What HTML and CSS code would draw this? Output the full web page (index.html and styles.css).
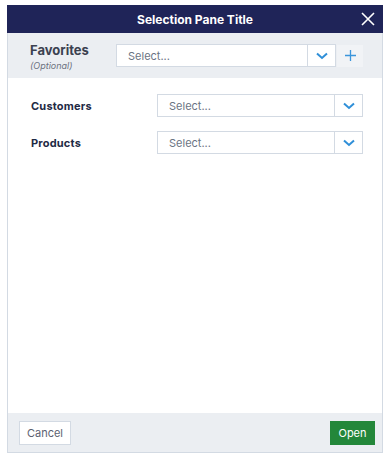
FILE: index.html
```html
<!DOCTYPE html>
<html lang="en">
<head>
    <meta charset="UTF-8">
    <title>Selection Pane</title>
    <link rel="stylesheet" href="styles.css">
</head>
<body>
    <div class="pane">
        <div class="pane-header">
            <span class="pane-title">Selection Pane Title</span>
            <button class="close-btn" aria-label="Close">
                <svg width="14" height="14" viewBox="0 0 14 14"><path d="M1 1L13 13M13 1L1 13" stroke="#fff" stroke-width="1.6"/></svg>
            </button>
        </div>
        <div class="favorites">
            <div class="fav-label">
                <span class="fav-name">Favorites</span>
                <span class="fav-note">(Optional)</span>
            </div>
            <div class="select fav-select">
                <span class="placeholder">Select...</span>
                <span class="chevron"><svg width="12" height="8" viewBox="0 0 12 8"><path d="M1 1.5L6 6L11 1.5" fill="none" stroke="#2f8fd8" stroke-width="2"/></svg></span>
            </div>
            <button class="add-btn" aria-label="Add">
                <svg width="11" height="11" viewBox="0 0 11 11"><path d="M5.5 0V11M0 5.5H11" stroke="#3a95db" stroke-width="1.3"/></svg>
            </button>
        </div>
        <div class="pane-body">
            <div class="field">
                <label>Customers</label>
                <div class="select">
                    <span class="placeholder">Select...</span>
                    <span class="chevron"><svg width="12" height="8" viewBox="0 0 12 8"><path d="M1 1.5L6 6L11 1.5" fill="none" stroke="#2f8fd8" stroke-width="2"/></svg></span>
                </div>
            </div>
            <div class="field">
                <label>Products</label>
                <div class="select">
                    <span class="placeholder">Select...</span>
                    <span class="chevron"><svg width="12" height="8" viewBox="0 0 12 8"><path d="M1 1.5L6 6L11 1.5" fill="none" stroke="#2f8fd8" stroke-width="2"/></svg></span>
                </div>
            </div>
        </div>
        <div class="pane-footer">
            <button class="btn cancel">Cancel</button>
            <button class="btn open">Open</button>
        </div>
    </div>
</body>
</html>
```

FILE: styles.css
```css
:root {
    --navy: #1f2458;
    --band: #ebeef2;
    --border: #d3dae3;
    --label: #1e2a44;
}
html, body {
    margin: 0;
    padding: 0;
}
body {
    font-family: Inter, 'Noto Sans', sans-serif;
    background: #fff;
    padding: 5px 7px 0 7px;
    width: 390px;
    height: 464px;
    box-sizing: border-box;
}
.pane {
    width: 376px;
    height: 448px;
    display: flex;
    flex-direction: column;
    border: 1px solid var(--border);
    border-top: none;
    box-sizing: border-box;
}
.pane-header {
    height: 28px;
    margin: 0 -1px;
    background: var(--navy);
    display: flex;
    align-items: center;
    justify-content: center;
    position: relative;
}
.pane-title {
    color: #fff;
    font-size: 12px;
    font-weight: 700;
}
.close-btn {
    position: absolute;
    right: 8px;
    top: 7px;
    background: none;
    border: none;
    padding: 0;
    width: 14px;
    height: 14px;
    cursor: pointer;
    display: flex;
}
.favorites {
    height: 45px;
    background: var(--band);
    display: flex;
    align-items: center;
    padding: 0 0 0 22px;
    box-sizing: border-box;
}
.fav-label {
    width: 86px;
    display: flex;
    flex-direction: column;
    gap: 2px;
    margin-top: 3px;
}
.fav-name {
    font-size: 13px;
    font-weight: 700;
    color: #3b4150;
    line-height: 15px;
}
.fav-note {
    font-size: 9px;
    font-style: italic;
    color: #6b7280;
    line-height: 12px;
}
.select {
    display: flex;
    align-items: stretch;
    height: 23px;
    border: 1px solid var(--border);
    background: #fff;
    box-sizing: border-box;
}
.placeholder {
    flex: 1;
    display: flex;
    align-items: center;
    padding-left: 11px;
    font-size: 11px;
    color: #6b7483;
}
.chevron {
    width: 27px;
    border-left: 1px solid var(--border);
    display: flex;
    align-items: center;
    justify-content: center;
}
.fav-select {
    width: 220px;
}
.add-btn {
    width: 26px;
    height: 22px;
    margin-left: 1px;
    background: #f1f3f6;
    border: none;
    padding: 0;
    display: flex;
    align-items: center;
    justify-content: center;
}
.pane-body {
    flex: 1;
    padding: 16px 19px 0 23px;
    display: flex;
    flex-direction: column;
    gap: 14px;
}
.field {
    display: flex;
    align-items: center;
}
.field label {
    width: 126px;
    font-size: 11px;
    font-weight: 700;
    letter-spacing: 0.2px;
    color: var(--label);
}
.field .select {
    flex: 1;
}
.pane-footer {
    height: 39px;
    background: var(--band);
    display: flex;
    align-items: center;
    justify-content: space-between;
    padding: 0 7px 0 11px;
}
.btn {
    height: 24px;
    font-family: inherit;
    font-size: 11px;
    border: 1px solid var(--border);
    padding: 0;
}
.cancel {
    width: 52px;
    background: #fff;
    color: #5b6170;
}
.open {
    width: 45px;
    background: #23873a;
    border-color: #23873a;
    color: #fff;
}
```
